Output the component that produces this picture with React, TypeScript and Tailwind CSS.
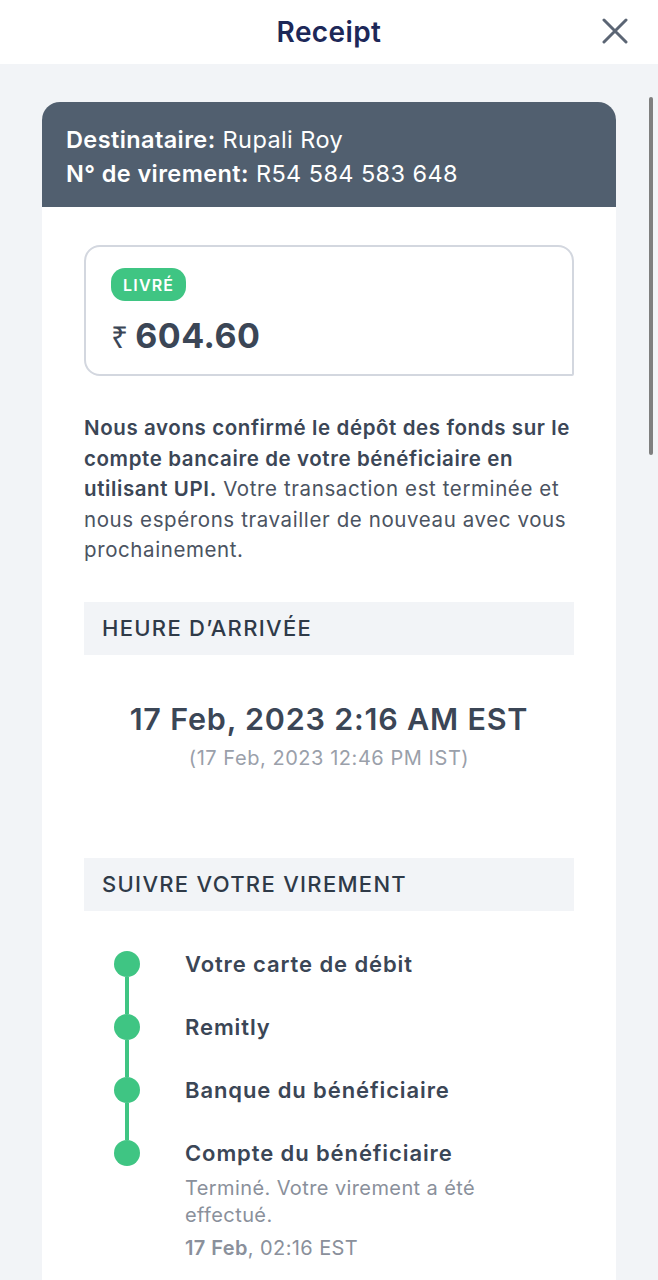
import React from "react";

const font = { fontFamily: "Inter, 'Noto Sans', Roboto, sans-serif" };

function Step({ label, last, children }: { label: string; last?: boolean; children?: React.ReactNode }) {
  return (
    <div className="flex">
      <div className="flex w-[101px] shrink-0 flex-col items-start">
        <div className="ml-[30px] h-[26px] w-[26px] rounded-full bg-[#3fc583]" />
        {!last && <div className="ml-[41px] w-[4px] flex-1 bg-[#3fc583]" />}
      </div>
      <div className={last ? "" : "pb-[37px]"}>
        <div className="text-[22px] font-semibold leading-[26px] tracking-[0.9px] text-[#3b4656]">{label}</div>
        {children}
      </div>
    </div>
  );
}

export default function App() {
  return (
    <div className="relative min-h-[1280px] w-[658px] overflow-hidden bg-[#f2f4f7]" style={font}>
      {/* top bar */}
      <div className="relative flex h-[64px] items-center justify-center bg-white">
        <span className="text-[28px] font-semibold tracking-[0.4px] text-[#1d2858]">Receipt</span>
        <svg className="absolute right-[30px] top-[18px]" width="26" height="26" viewBox="0 0 26 26" fill="none">
          <path d="M2 2L24 24M24 2L2 24" stroke="#5b6574" strokeWidth="3" strokeLinecap="round" />
        </svg>
      </div>

      <div className="px-[42px] pt-[38px]">
        <div className="overflow-hidden rounded-t-[18px] bg-white">
          <div className="bg-[#515f6f] px-[24px] pb-[16px] pt-[21px] text-[23.5px] leading-[34px] tracking-[0.4px] text-white">
            <div>
              <span className="font-semibold">Destinataire:</span> Rupali Roy
            </div>
            <div>
              <span className="font-semibold">N° de virement:</span> R54 584 583 648
            </div>
          </div>

          <div className="px-[42px] pb-[40px] pt-[38px]">
            {/* amount box */}
            <div className="rounded-[16px] rounded-br-[2px] border-2 border-[#d3d7df] px-[25px] pb-[15px] pt-[21px]">
              <div className="inline-flex h-[33px] items-center rounded-[14px] bg-[#3fc583] px-[12px] text-[16px] font-semibold tracking-[1.2px] text-white">
                LIVRÉ
              </div>
              <div className="mt-[13px] flex items-baseline text-[#3b4656]">
                <span className="text-[30px] font-normal" style={{ fontFamily: "'Noto Sans', 'DejaVu Sans', sans-serif" }}>
                  ₹
                </span>
                <span className="ml-[7px] text-[34px] font-bold leading-[40px] tracking-[0.5px]">604.60</span>
              </div>
            </div>

            {/* paragraph */}
            <p className="mt-[37px] text-[20.5px] leading-[30.5px] tracking-[0.6px] text-[#4b5361]">
              <span className="font-semibold text-[#3b4656]">
                Nous avons confirmé le dépôt des fonds sur le compte bancaire de votre bénéficiaire en utilisant UPI.
              </span>{" "}
              Votre transaction est terminée et nous espérons travailler de nouveau avec vous prochainement.
            </p>

            {/* arrival */}
            <div className="mt-[36px] flex h-[53px] items-center bg-[#f2f4f7] px-[18px] text-[22px] font-medium tracking-[1.3px] text-[#2f3a48]">
              HEURE D’ARRIVÉE
            </div>
            <div className="mt-[44px] text-center text-[30.5px] font-semibold leading-[40px] tracking-[0.8px] text-[#3b4656]">
              17 Feb, 2023 2:16 AM EST
            </div>
            <div className="mt-[6px] text-center text-[20px] leading-[26px] tracking-[0.55px] text-[#9aa0aa]">
              (17 Feb, 2023 12:46 PM IST)
            </div>

            {/* track */}
            <div className="mt-[87px] flex h-[53px] items-center bg-[#f2f4f7] px-[18px] text-[22px] font-medium tracking-[1.3px] text-[#2f3a48]">
              SUIVRE VOTRE VIREMENT
            </div>
            <div className="mt-[40px]">
              <Step label="Votre carte de débit" />
              <Step label="Remitly" />
              <Step label="Banque du bénéficiaire" />
              <Step label="Compte du bénéficiaire" last>
                <div className="mt-[9px] text-[20px] leading-[27px] tracking-[0.4px] text-[#8a909b]">
                  Terminé. Votre virement a été
                  <br />
                  effectué.
                </div>
                <div className="mt-[6px] text-[20px] leading-[27px] tracking-[0.4px] text-[#8a909b]">
                  <span className="font-semibold">17 Feb</span>, 02:16 EST
                </div>
              </Step>
            </div>
          </div>
        </div>
      </div>

      {/* scrollbar */}
      <div className="absolute right-[5px] top-[97px] h-[358px] w-[4px] rounded-full bg-[#7f7f7f]" />
    </div>
  );
}
